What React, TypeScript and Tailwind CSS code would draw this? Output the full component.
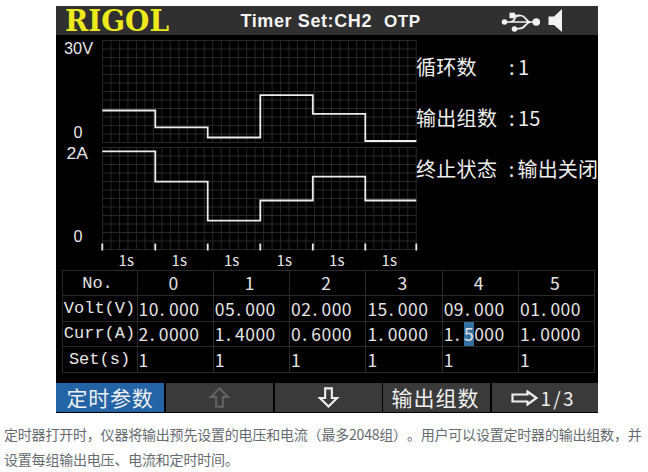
const EDGES = [102.3, 155.3, 207.7, 260.3, 312.8, 365.3, 416.3];
const VOLT_LEVELS = [110.5, 127.3, 137.5, 95.2, 113.8, 141];
const CURR_LEVELS = [151.3, 181.7, 220.7, 200.5, 176.7, 200.5];

const ROWS = [
  { label: 'Volt(V)', values: ['10.000', '05.000', '02.000', '15.000', '09.000', '01.000'] },
  { label: 'Curr(A)', values: ['2.0000', '1.4000', '0.6000', '1.0000', '1.5000', '1.0000'] },
  { label: 'Set(s)', values: ['1', '1', '1', '1', '1', '1'] },
];

function steps(levels: number[]) {
  return levels
    .map((y, i) => `${i === 0 ? 'M' : 'L'}${EDGES[i]} ${y}L${EDGES[i + 1]} ${y}`)
    .join('');
}

function gridPath(top: number, bottom: number) {
  let d = '';
  for (let i = 0; i <= 37; i++) d += `M${102.5 + i * 8.48} ${top}V${bottom}`;
  for (let j = 0; j <= 12; j++) d += `M102 ${top + (j * (bottom - top)) / 12}H416.5`;
  return d;
}

function Chart() {
  return (
    <svg
      className="block h-[235px] w-[360px] shrink-0 font-['Noto_Sans_CJK_SC',sans-serif]"
      viewBox="56 35 360 235"
      overflow="visible"
    >
      <path d={gridPath(40.5, 142.5)} stroke="#282828" strokeWidth="1" fill="none" />
      <path d={gridPath(147.5, 249.5)} stroke="#282828" strokeWidth="1" fill="none" />
      <g stroke="#ececec" strokeWidth="1.8" fill="none">
        <path d={steps(VOLT_LEVELS)} />
        <path d={steps(CURR_LEVELS)} />
        {EDGES.map((x) => (
          <path key={x} d={`M${x} 243.5v7`} />
        ))}
      </g>
      <g fill="#e6e6e6" fontSize="16" className="font-['Liberation_Sans',Arial,sans-serif]">
        <text x="64" y="53.6" textLength="29" lengthAdjust="spacingAndGlyphs">30V</text>
        <text x="73.5" y="138" textLength="9" lengthAdjust="spacingAndGlyphs">0</text>
        <text x="66.5" y="159" textLength="21.5" lengthAdjust="spacingAndGlyphs">2A</text>
        <text x="73.5" y="241.8" textLength="9" lengthAdjust="spacingAndGlyphs">0</text>
      </g>
      <g fill="#e6e6e6" fontSize="15">
        {EDGES.slice(0, 6).map((x) => (
          <text key={x} x={x + 16.3} y="265.5">1s</text>
        ))}
      </g>
    </svg>
  );
}

function Info({ label, value }: { label: string; value: string }) {
  return (
    <div className="flex h-[51px] items-center whitespace-nowrap text-[20px] leading-none text-[#eeeeee]">
      <span className="w-[93px] tracking-[0.3px]">{label}</span>
      <span className="w-[9px]">:</span>
      <span className="tracking-[0.1px]">{value}</span>
    </div>
  );
}

function Digits({ text, cursor }: { text: string; cursor?: boolean }) {
  const [whole, frac] = text.split('.');
  return (
    <span className="whitespace-nowrap text-[17.5px] tracking-[0.45px] text-[#e4e4e4]">
      {whole}
      {frac && <span className="inline-block w-[10.1px] pl-px">.</span>}
      {frac && cursor ? (
        <>
          <span className="inline-block h-[24px] w-[10.2px] bg-[#33709f] leading-[24px]">{frac[0]}</span>
          {frac.slice(1)}
        </>
      ) : (
        frac
      )}
    </span>
  );
}

const COLS = 'grid grid-cols-[75px_76.3px_76.3px_76.3px_76.3px_76.3px_76px]';
const CELL = 'flex h-[25.4px] items-center border-l border-t border-[#2a2a2a]';

function Table() {
  return (
    <div className="ml-[5.5px] w-[533px] border-b border-r border-[#2a2a2a] leading-none">
      <div className={COLS}>
        <div className={`${CELL} justify-center pr-1 font-['Liberation_Mono',monospace] text-[17px] text-[#e4e4e4]`}>No.</div>
        {[0, 1, 2, 3, 4, 5].map((n) => (
          <div key={n} className={`${CELL} justify-center pr-[3px]`}>
            <Digits text={String(n)} />
          </div>
        ))}
      </div>
      {ROWS.map((row, r) => (
        <div key={row.label} className={COLS}>
          <div className={`${CELL} justify-center font-['Liberation_Mono',monospace] text-[17px] text-[#e4e4e4]`}>
            {row.label}
          </div>
          {row.values.map((v, i) => (
            <div key={i} className={`${CELL} pl-px`}>
              <Digits text={v} cursor={r === 1 && i === 4} />
            </div>
          ))}
        </div>
      ))}
    </div>
  );
}

function Header() {
  return (
    <div className="flex h-[29px] items-center bg-[#303030] font-['Liberation_Sans',Arial,sans-serif] font-bold text-[#f4f4f4]">
      <svg className="ml-[9px] block h-[29px] w-[105px]" viewBox="0 0 105 29" overflow="visible">
        <text
          x="0"
          y="25.4"
          textLength="104"
          lengthAdjust="spacingAndGlyphs"
          className="font-['DejaVu_Serif',serif] font-bold"
          fontSize="29.5"
          fill="#ece91c"
        >
          RIGOL
        </text>
      </svg>
      <span className="ml-[70.5px] w-[143.5px] whitespace-nowrap text-[18px] leading-none tracking-[0.6px]">Timer Set:CH2</span>
      <span className="w-[117px] pt-0.5 text-[17px] leading-none tracking-[0.6px]">OTP</span>
      <svg className="block h-[29px] w-[62px]" viewBox="500 6 62 29" fill="#f2f2f2" stroke="#f2f2f2">
        <path
          d="M504 22H535M509 22C516 22 511 15.5 519 15.5C526 15.5 524 22 530 22M514 28.700H518C525 28.700 524 22 530 22"
          fill="none"
          strokeWidth="1.7"
          transform="translate(0 0)"
        />
        <circle cx="503.500" cy="22" r="2.800" stroke="none" />
        <rect x="508.5" y="12.700" width="5.500" height="5.500" stroke="none" />
        <path d="M513 15.500h6" strokeWidth="1.7" />
        <circle cx="513.5" cy="29" r="2.8" stroke="none" />
        <circle cx="535.3" cy="22" r="3.8" stroke="none" />
        <path d="M547.5 16.5h5.5l8-7.5v23l-8-7h-5.500z" stroke="none" />
      </svg>
    </div>
  );
}

function Arrow({ className }: { className: string }) {
  return (
    <svg className={className} viewBox="0 0 24 24" fill="none" stroke="currentColor" strokeWidth="2.2">
      <path d="M8.500 2.500h7v10h5.500L12 21.500 3 12.500h5.500z" />
    </svg>
  );
}

function Menu() {
  return (
    <div className="grid h-[29px] grid-cols-[108px_107px_107px_106.500px_106.500px] justify-between text-[21px] leading-none text-[#efefef]">
      <div className="flex items-center justify-center bg-[#2364a6] tracking-[0.7px]">定时参数</div>
      <div className="flex items-center justify-center bg-[#3a3a3a] text-[#626262]">
        <Arrow className="h-[23px] w-[23px] rotate-180" />
      </div>
      <div className="flex items-center justify-center bg-[#3a3a3a]">
        <Arrow className="h-[23px] w-[23px]" />
      </div>
      <div className="flex items-center justify-center bg-[#3a3a3a] pr-0.5 tracking-[1px]">输出组数</div>
      <div className="flex items-center bg-[#3a3a3a] pl-[19px]">
        <svg className="h-[16px] w-[28px]" viewBox="0 0 28 16" fill="none" stroke="currentColor" strokeWidth="2.200">
          <path d="M1.500 4.500h15v-3l9 6.500-9 6.500v-3h-15z" />
        </svg>
        <span className="ml-[2px] text-[19px] tracking-[0.7px]">
          1<span className="px-[1.500px]">/</span>3
        </span>
      </div>
    </div>
  );
}

export default function App() {
  return (
    <div className="h-[472px] w-[648px] overflow-hidden bg-white pt-[6px] font-['Noto_Sans_CJK_SC',sans-serif]">
      <div className="ml-[56px] h-[407px] w-[542px] bg-black">
        <Header />
        <div className="flex h-[235px]">
          <Chart />
          <div className="flex w-[182px] flex-col pt-[6px]">
            <Info label="循环数" value="1" />
            <Info label="输出组数" value="15" />
            <Info label="终止状态" value="输出关闭" />
          </div>
        </div>
        <div className="h-[113px]">
          <Table />
        </div>
        <Menu />
      </div>
      <p className="whitespace-nowrap pl-[4px] pt-[9px] text-[14px] leading-[25px] tracking-[-0.2px] text-[#666b70] [text-spacing-trim:space-all]">
        定时器打开时，仪器将输出预先设置的电压和电流（最多2048组）。用户可以设置定时器的输出组数，并
        <br />
        设置每组输出电压、电流和定时时间。
      </p>
    </div>
  );
}
